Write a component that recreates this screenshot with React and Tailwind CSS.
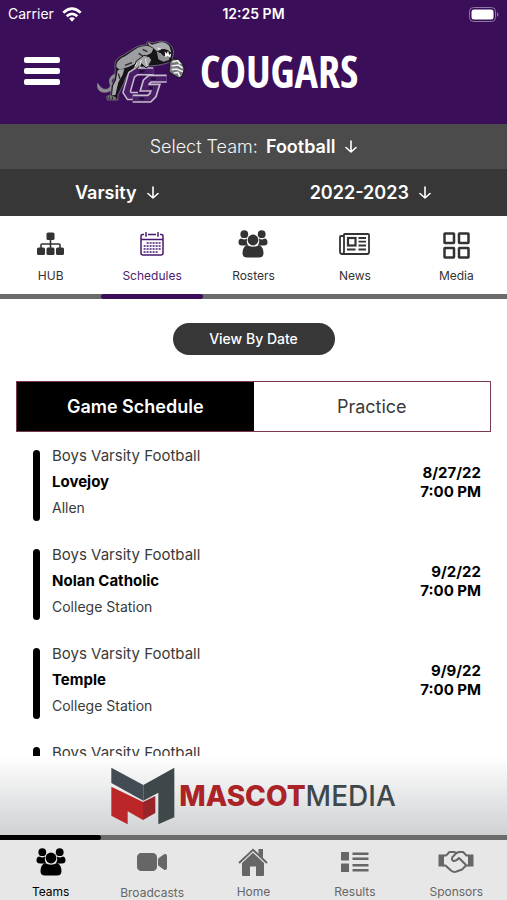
import React from "react";
import { IoVideocam } from "react-icons/io5";

function WifiIcon() {
  return (
    <svg width="20" height="15" viewBox="0 0 60 45" fill="none" stroke="white" strokeWidth="8" aria-hidden="true">
      <path d="M4 17Q30-7 56 17" />
      <path d="M14 28Q30 13 46 28" />
      <path d="M30 44L21 34Q30 27 39 34Z" fill="white" stroke="none" />
    </svg>
  );
}

function BatteryIcon() {
  return (
    <svg width="30" height="15" viewBox="0 0 30 15" aria-hidden="true">
      <rect x="0.5" y="0.5" width="26" height="14" rx="4" fill="none" stroke="#8d76a1" />
      <rect x="2.5" y="2.5" width="22" height="10" rx="2.5" fill="white" />
      <path d="M28 5q3 2.500 0 5z" fill="#8d76a1" />
    </svg>
  );
}

function CougarLogo() {
  const c = "M192 106H142L127 116L112 168L120 180H146";
  const s = "M232 128H182L171 138L166 155H198L191 177L180 188H130";
  return (
    <svg width="90" height="70" viewBox="20 0 270 210" role="img" aria-label="Cougars logo">
      <g stroke="#8f8b96" strokeWidth="2" strokeLinejoin="round">
        <path
          d="M84 112C64 116 56 131 62 144C66 154 54 163 42 159C33 156 29 147 25 142C22 159 31 170 47 169C66 168 76 154 68 140C64 131 72 124 84 122Z"
          fill="#8e8e91"
        />
        <path
          d="M78 99C72 80 82 66 101 58L134 37C147 29 161 26 174 27C168 18 174 15 184 19L194 21C211 12 232 16 240 24C249 31 255 45 251 58L247 77C235 80 222 86 204 88L178 90L144 95C123 101 110 118 104 141L86 177L86 192H54L52 181L64 177L66 150L76 127Z"
          fill="#161419"
        />
      </g>
      <path d="M81 93C79 77 94 66 107 61L139 39C150 31 167 28 180 31L192 38L186 51L164 62L144 80L119 92L91 101Z" fill="#9d9ea1" />
      <path d="M85 103L105 98L100 116L87 139L78 177L68 178L71 149L80 132Z" fill="#a9a9ad" />
      <path d="M176 18L188 26L208 20C221 16 237 23 241 32L246 49L236 47L226 38L218 43L202 45L191 35L178 27Z" fill="#aaa9ad" />
      <path d="M202 46L214 50L222 59L230 54L237 60L242 57L239 72L222 77L207 70Z" fill="#909093" />
      <path d="M217 39L236 42L248 55L244 62L235 55L225 60L217 52L204 47Z" fill="#17151a" />
      <path d="M226 46L232 53L236 44L240 57L246 52L243 65L235 59L228 64Z" fill="white" />
      <path d="M203 34L217 39L207 41Z" fill="#f1f1f1" />
      <path d="M107 88L128 80M148 52L160 60M160 40L174 47M87 113L92 129" stroke="#28262b" strokeWidth="4" fill="none" />
      <g fill="none">
        <path d={c} stroke="#c6bccb" strokeWidth="25" />
        <path d={c} stroke="#4a1d69" strokeWidth="16" />
        <path d={s} stroke="#c6bccb" strokeWidth="25" />
        <path d={s} stroke="#4a1d69" strokeWidth="15" />
        <path d="M150 106H166M185 128H200M178 155H190M150 188H165" stroke="#1f0d2e" strokeWidth="7" />
      </g>
      <path d="M135 93L141 75L164 58L180 62L187 72L177 91L170 96L157 83L142 99Z" fill="#a5a5a8" stroke="#1a181c" strokeWidth="3" />
      <path d="M143 80L136 94L139 98M156 72L151 92L156 96M169 68L171 86L178 90" stroke="#e6e6e8" strokeWidth="3" fill="none" />
      <path d="M241 80L249 69L268 70L279 82L285 99L279 121L267 125L253 117L239 108Z" fill="#777679" stroke="#151318" strokeWidth="3" />
      <path d="M249 78L265 74L273 84M247 90L267 87L280 96M247 101L262 99L281 107M253 111L266 109L272 122" stroke="#eeeeef" strokeWidth="5" fill="none" />
      <path d="M55 181L66 178L79 184L82 191L55 190Z" fill="#777679" />
      <path d="M60 182V190M69 182V190" stroke="#211f24" strokeWidth="3" />
    </svg>
  );
}

function HubIcon() {
  return (
    <svg width="27" height="24" viewBox="0 0 27 24" fill="currentColor" aria-hidden="true">
      <rect x="9.500" y="0.500" width="8" height="7.500" rx="1.500" />
      <rect x="0" y="15.500" width="8" height="7.500" rx="1.500" />
      <rect x="9.500" y="15.500" width="8" height="7.500" rx="1.500" />
      <rect x="19" y="15.500" width="8" height="7.500" rx="1.500" />
      <path d="M13.500 7V16M4 16V13Q4 12 5 12H22Q23 12 23 13V16" fill="none" stroke="currentColor" strokeWidth="1.600" />
    </svg>
  );
}

function CalendarIcon() {
  const dots = [];
  for (let row = 0; row < 4; row++) {
    for (let col = 0; col < 6; col++) {
      if ((row === 0 && col === 0) || (row === 3 && col === 5)) continue;
      dots.push(<rect key={`${row}-${col}`} x={3.6 + col * 3} y={10 + row * 3} width="2" height="2" opacity="0.75" />);
    }
  }
  return (
    <svg width="24" height="24" viewBox="0 0 24 24" fill="currentColor" aria-hidden="true">
      <path d="M4 2.500H2.500Q1 2.500 1 4V21Q1 23 3 23H21Q23 23 23 21V4Q23 2.500 21.500 2.500H20M8 2.500H16M1 7.500H23" fill="none" stroke="currentColor" strokeWidth="1.500" />
      <path d="M6 0.700V4.300M18 0.700V4.300" stroke="currentColor" strokeWidth="1.500" strokeLinecap="round" />
      {dots}
    </svg>
  );
}

function GroupIcon() {
  return (
    <svg width="30" height="28" viewBox="0 0 30 28" fill="currentColor" aria-hidden="true">
      <circle cx="6.300" cy="4.200" r="3.900" />
      <circle cx="23.700" cy="4.200" r="3.900" />
      <path d="M3 8.600Q6 10.300 9 8.500Q8 12.500 10 15.500H4Q0.500 15.500 0.500 12.500Q0.500 9 3 8.600Z" />
      <path d="M27 8.600Q24 10.300 21 8.500Q22 12.500 20 15.500H26Q29.500 15.500 29.500 12.500Q29.500 9 27 8.600Z" />
      <circle cx="15" cy="10" r="5.400" />
      <path d="M9 15Q15 18.500 21 15Q25.500 17 25.500 23Q25.500 27.500 21 27.500H9Q4.500 27.500 4.500 23Q4.500 17 9 15Z" />
    </svg>
  );
}

function NewsIcon() {
  return (
    <svg width="31" height="22" viewBox="0 0 31 22" fill="none" stroke="currentColor" strokeWidth="1.800" aria-hidden="true">
      <path d="M5 1.500Q5 1 6 1H29Q30 1 30 2V19Q30 21 28 21H3Q5 21 5 18.500Z" />
      <path d="M5 3H2Q1 3 1 4V18.500Q1 21 3 21" />
      <rect x="9" y="5" width="7.500" height="7.500" strokeWidth="2.200" />
      <path d="M19.500 5H27M19.500 8.700H27M19.500 12.500H27M8 16.500H16.500M19.500 16.500H27" />
    </svg>
  );
}

function MediaIcon() {
  return (
    <svg width="27" height="29" viewBox="0 -2 27 29" fill="none" stroke="currentColor" strokeWidth="2.500" aria-hidden="true">
      <rect x="1.500" y="1.500" width="9.500" height="9.500" rx="0.500" />
      <rect x="16" y="1.500" width="9.500" height="9.500" rx="0.500" />
      <rect x="1.500" y="16" width="9.500" height="9.500" rx="0.500" />
      <rect x="16" y="16" width="9.500" height="9.500" rx="0.500" />
    </svg>
  );
}

function HomeIcon() {
  return (
    <svg width="30" height="28" viewBox="0 0 30 28" fill="currentColor" aria-hidden="true">
      <path d="M20.500 1H25V10L20.500 6Z" />
      <path d="M1 15L15 1.800L29 15" fill="none" stroke="currentColor" strokeWidth="2" />
      <path d="M4 15L15 4.800L26 15V27Q26 28 25 28H18V18.500H12V28H5Q4 28 4 27Z" />
    </svg>
  );
}

function ResultsIcon() {
  return (
    <svg width="28" height="20" viewBox="0 0 28 20" fill="currentColor" aria-hidden="true">
      <rect width="8" height="8.500" rx="0.500" />
      <rect y="11.500" width="8" height="8.500" rx="0.500" />
      <path d="M11.500 0.500H27.500V3H11.500ZM11.500 5.500H27.500V8H11.500ZM11.500 12H27.500V14.500H11.500ZM11.500 17H27.500V19.500H11.500Z" />
    </svg>
  );
}

function HandshakeIcon() {
  return (
    <svg width="36" height="24" viewBox="0 0 36 24" fill="none" stroke="currentColor" strokeWidth="2" strokeLinejoin="round" strokeLinecap="round" aria-hidden="true">
      <path d="M0.500 4.500H6V16.500H0.500ZM30 4.500H35.500V16.500H30Z" fill="currentColor" stroke="none" />
      <path d="M6 5.500H8L11.500 2H16L18.500 3L21 2H25L28.500 5.500H30M6 15.500H7.500L13 20.500Q16 23 18.500 21.500L24 19.500L28 15.500H30" />
      <path d="M18.500 3L14.500 7Q13 10 15.500 11Q18 11.500 21 8L27.500 14.500" />
    </svg>
  );
}

function ArrowDown() {
  return (
    <svg className="ml-[2px]" width="12" height="13" viewBox="0 0 12 13" fill="none" stroke="currentColor" strokeWidth="1.600" strokeLinecap="round" strokeLinejoin="round" aria-hidden="true">
      <path d="M6 1V12M1 7.500L6 12L11 7.500" />
    </svg>
  );
}

function MascotMark() {
  return (
    <svg width="64" height="58" viewBox="0 0 192 172" aria-hidden="true">
      <path d="M1 1L97 53V100L1 47Z" fill="#434c54" />
      <path d="M97 53L190 1V150L142 171V76L97 100Z" fill="#3e484a" />
      <path d="M1 58L96 104V158L50 132V171L1 145Z" fill="#bb2629" />
      <path d="M96 104L133 86V137L96 158Z" fill="#99242a" />
    </svg>
  );
}

function Picker({ label, value, caption }) {
  return (
    <label className="flex items-center justify-center gap-2 text-lg text-white">
      {caption && <span className="font-light text-gray-100">{caption}</span>}
      <select aria-label={label} className="field-sizing-content appearance-none bg-transparent font-semibold outline-none" defaultValue={value}>
        <option>{value}</option>
      </select>
      <ArrowDown />
    </label>
  );
}

const sections = [
  { name: "HUB", icon: <HubIcon /> },
  { name: "Schedules", icon: <CalendarIcon />, active: true },
  { name: "Rosters", icon: <GroupIcon /> },
  { name: "News", icon: <NewsIcon /> },
  { name: "Media", icon: <MediaIcon /> },
];

const games = [
  { id: 1, opponent: "Lovejoy", place: "Allen", date: "8/27/22", time: "7:00 PM" },
  { id: 2, opponent: "Nolan Catholic", place: "College Station", date: "9/2/22", time: "7:00 PM" },
  { id: 3, opponent: "Temple", place: "College Station", date: "9/9/22", time: "7:00 PM" },
  { id: 4 },
];

const destinations = [
  { name: "Teams", icon: <GroupIcon />, active: true },
  { name: "Broadcasts", icon: <IoVideocam size={32} /> },
  { name: "Home", icon: <HomeIcon /> },
  { name: "Results", icon: <ResultsIcon /> },
  { name: "Sponsors", icon: <HandshakeIcon /> },
];

export default function App() {
  return (
    <div className="flex h-screen flex-col overflow-hidden bg-white font-['Inter','Liberation_Sans',sans-serif] text-[#3a3a3a]">
      <header className="shrink-0 bg-[#3b0e59] pb-[10px] text-white">
        <div className="grid h-7 grid-cols-3 items-center px-2 text-sm">
          <div className="flex items-center gap-2">
            <span>Carrier</span>
            <WifiIcon />
          </div>
          <div className="text-center font-semibold">12:25 PM</div>
          <div className="flex justify-end">
            <BatteryIcon />
          </div>
        </div>
        <div className="flex h-[86px] items-center px-6">
          <button aria-label="Open menu" className="flex w-9 flex-col gap-[5px]">
            <span className="h-[6px] w-full rounded-xs bg-white" />
            <span className="h-[6px] w-full rounded-xs bg-white" />
            <span className="h-[6px] w-full rounded-xs bg-white" />
          </button>
          <div className="ml-9 flex items-center gap-[14px]">
            <CougarLogo />
            <h1 className="font-['Noto_Sans_ExtraCondensed','Open_Sans_Condensed','Roboto_Condensed','Liberation_Sans_Narrow','Liberation_Sans',sans-serif] text-[44px] leading-none font-semibold">COUGARS</h1>
          </div>
        </div>
      </header>

      <div className="flex h-[45px] shrink-0 items-center justify-center bg-[#4b4b4b]">
        <Picker label="Select Team" caption="Select Team:" value="Football" />
      </div>
      <div className="grid h-[47px] shrink-0 grid-cols-2 items-center bg-[#373737]">
        <div className="pr-5">
          <Picker label="Level" value="Varsity" />
        </div>
        <div className="pr-5">
          <Picker label="Season" value="2022-2023" />
        </div>
      </div>

      <nav aria-label="Team sections" className="grid shrink-0 grid-cols-5 bg-[#6b6b6b]">
        {sections.map((s) => (
          <a key={s.name} href={`#${s.name.toLowerCase()}`} className={s.active ? "text-[#4a1a70]" : "text-[#333]"}>
            <span className="flex h-[78px] flex-col items-center bg-white pt-3 text-xs">
              <span className="flex h-8 items-center">{s.icon}</span>
              <span className="mt-2 leading-4">{s.name}</span>
            </span>
            <span className={s.active ? "block h-[5px] rounded-full bg-[#3b0e59]" : "block h-[5px]"} />
          </a>
        ))}
      </nav>

      <main className="min-h-0 flex-1 overflow-hidden px-4 pt-6">
        <button className="mx-auto block h-8 w-[162px] rounded-full bg-[#373737] text-sm font-medium text-white">View By Date</button>
        <div className="mt-[26px] grid h-[51px] grid-cols-2 border border-[#7b3950] text-lg">
          <button className="bg-black font-semibold text-white">Game Schedule</button>
          <button className="bg-white">Practice</button>
        </div>
        <ul className="mt-[11px] flex flex-col gap-[21px] pr-[10px] pl-[17px]">
          {games.map((g) => (
            <li key={g.id} className="flex h-[78px] items-end gap-3">
              <span className="h-[71px] w-[7px] rounded-full bg-black" />
              <div className="flex-1 self-start text-[15px] leading-[26px]">
                <p>Boys Varsity Football</p>
                <p className="font-bold text-black">{g.opponent}</p>
                <p className="text-[14px]">{g.place}</p>
              </div>
              <div className="self-center text-right text-[15px] leading-[19px] font-bold text-black">
                <p>{g.date}</p>
                <p>{g.time}</p>
              </div>
            </li>
          ))}
        </ul>
      </main>

      <aside aria-label="Sponsor" className="flex h-[79px] shrink-0 items-center justify-center gap-1 bg-linear-to-b from-white to-[#cfd1d3]">
        <MascotMark />
        <div className="flex text-[28px] leading-none">
          <span className="font-extrabold text-[#ab2327]">MASCOT</span>
          <span className="font-medium text-[#3e484a]">MEDIA</span>
        </div>
      </aside>

      <nav aria-label="Main" className="grid shrink-0 grid-cols-5 bg-[#6b6b6b]">
        {destinations.map((d) => (
          <a key={d.name} href={`#${d.name.toLowerCase()}`} className={d.active ? "text-black" : "text-[#666]"}>
            <span className={d.active ? "block h-[5px] rounded-r-full bg-black" : "block h-[5px]"} />
            <span className="flex h-[60px] flex-col items-center bg-[#e7e7e7] pt-[6px] text-xs">
              <span className="flex h-8 items-center">{d.icon}</span>
              <span className="mt-[7px] leading-4">{d.name}</span>
            </span>
          </a>
        ))}
      </nav>
    </div>
  );
}
